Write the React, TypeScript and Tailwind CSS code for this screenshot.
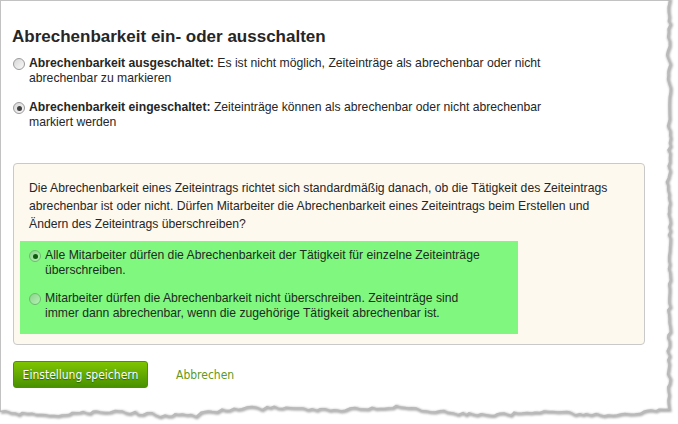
import { useMemo } from "react";

function rng(seed: number) {
  let a = seed;
  return () => {
    a |= 0; a = (a + 0x6d2b79f5) | 0;
    let t = Math.imul(a ^ (a >>> 15), 1 | a);
    t = (t + Math.imul(t ^ (t >>> 7), 61 | t)) ^ t;
    return ((t ^ (t >>> 14)) >>> 0) / 4294967296;
  };
}

// torn paper edge on the right and bottom of the screenshot
function TornEdge() {
  const { line, fill } = useMemo(() => {
    const r = rng(7);
    const pts: [number, number][] = [];
    for (let y = -2; y < 408; y += 3 + Math.floor(r() * 3)) {
      let x = 669 + (r() - 0.5) * 3;
      if (r() < 0.12) x += (r() - 0.5) * 5;
      pts.push([x, y]);
    }
    for (let x = 669; x > -4; x -= 3 + Math.floor(r() * 3)) {
      let y = 411 + 3 * Math.sin(x / 70) + 2 * Math.sin(x / 23) + (r() - 0.5) * 3;
      if (r() < 0.1) y += (r() - 0.5) * 4;
      pts.push([x, y]);
    }
    const line = pts.map(([x, y], i) => `${i ? "L" : "M"}${x.toFixed(1)} ${y.toFixed(1)}`).join(" ");
    const fill = `${line} L-4 430 L690 430 L690 -4 Z`;
    return { line, fill };
  }, []);
  return (
    <svg className="pointer-events-none absolute inset-0" width={678} height={424}>
      <defs>
        <filter id="blur" x="-5%" y="-5%" width="110%" height="110%">
          <feGaussianBlur stdDeviation="1.1" />
        </filter>
      </defs>
      <path d={fill} fill="#fff" />
      <path d={line} fill="none" stroke="#a8a8a8" strokeWidth={3} filter="url(#blur)" transform="translate(1 1)" />
      <path d={line} fill="none" stroke="#b9b9b9" strokeWidth={1.5} />
    </svg>
  );
}

function Radio({ on, green }: { on?: boolean; green?: boolean }) {
  return (
    <span className={green
      ? "mt-[2px] flex h-3 w-3 shrink-0 items-center justify-center rounded-full border border-[#6fba6f] bg-gradient-to-br from-[#8ed18e] to-[#b4f4b4]"
      : "mt-[2px] flex h-3 w-3 shrink-0 items-center justify-center rounded-full border border-[#9a9a9a] bg-gradient-to-br from-[#d6d6d6] to-[#fafafa]"}>
      {on && <span className={green ? "h-[5px] w-[5px] rounded-full bg-[#0d5a0d]" : "h-[5px] w-[5px] rounded-full bg-[#404040]"} />}
    </span>
  );
}

export default function App() {
  return (
    <div className="relative h-[424px] w-[678px] overflow-hidden bg-white font-['Liberation_Sans',Arial,sans-serif] text-[12.2px] text-[#262626]">
      <div className="h-full border-l border-t border-[#c2c2c2] pl-[11px] pt-[26px]">
        <h1 className="text-[17px] font-bold leading-[20px]">Abrechenbarkeit ein- oder ausschalten</h1>

        <div className="mt-[9px] flex flex-col gap-[14px] pl-px leading-[15px]">
          <div className="flex gap-1">
            <Radio />
            <p className="max-w-[530px]"><b>Abrechenbarkeit ausgeschaltet:</b> Es ist nicht möglich, Zeiteinträge als abrechenbar oder nicht abrechenbar zu markieren</p>
          </div>
          <div className="flex gap-1">
            <Radio on />
            <p className="max-w-[530px]"><b>Abrechenbarkeit eingeschaltet:</b> Zeiteinträge können als abrechenbar oder nicht abrechenbar markiert werden</p>
          </div>
        </div>

        <div className="ml-px mt-[33px] w-[632px] rounded-[4px] border border-[#c9c9c9] bg-[#fdf9ef] pb-[10px] pl-[15px] pr-[20px] pt-[15px]">
          <p className="leading-[18px]">Die Abrechenbarkeit eines Zeiteintrags richtet sich standardmäßig danach, ob die Tätigkeit des Zeiteintrags abrechenbar ist oder nicht. Dürfen Mitarbeiter die Abrechenbarkeit eines Zeiteintrags beim Erstellen und Ändern des Zeiteintrags überschreiben?</p>
          <div className="-ml-[9px] mt-[8px] flex w-[498px] flex-col gap-[13px] bg-[#80f880] pb-[13px] pl-[9px] pt-[7px] leading-[15px] text-[#1f2a1f]">
            <div className="flex gap-1">
              <Radio on green />
              <p className="max-w-[440px]">Alle Mitarbeiter dürfen die Abrechenbarkeit der Tätigkeit für einzelne Zeiteinträge überschreiben.</p>
            </div>
            <div className="flex gap-1">
              <Radio green />
              <p className="max-w-[440px]">Mitarbeiter dürfen die Abrechenbarkeit nicht überschreiben. Zeiteinträge sind immer dann abrechenbar, wenn die zugehörige Tätigkeit abrechenbar ist.</p>
            </div>
          </div>
        </div>

        <div className="ml-px mt-[16px] flex items-center gap-[28px] font-['DejaVu_Sans_Condensed','DejaVu_Sans',sans-serif] text-[12px]">
          <button className="h-[27px] w-[135px] rounded-[3px] border border-[#4d8f06] bg-gradient-to-b from-[#7fc400] to-[#4a9200] text-white [text-shadow:0_1px_1px_rgba(0,60,0,0.6)]">
            Einstellung speichern
          </button>
          <a className="text-[#62981c]">Abbrechen</a>
        </div>
      </div>
      <TornEdge />
    </div>
  );
}
